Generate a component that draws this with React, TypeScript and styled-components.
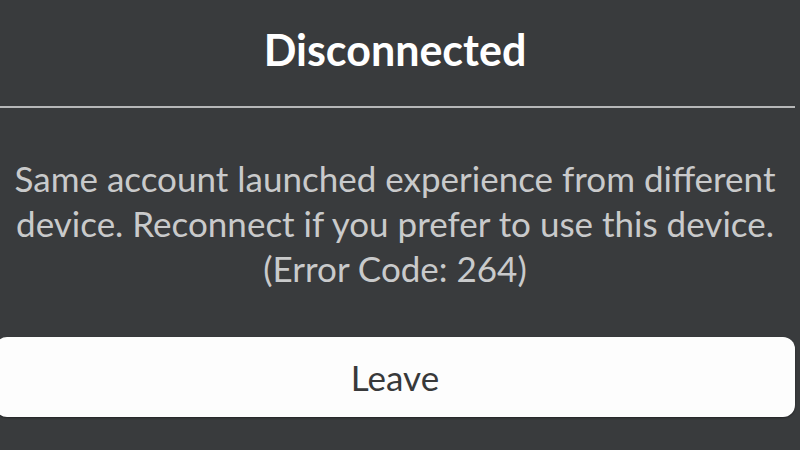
import styled, { createGlobalStyle } from "styled-components";

const GlobalStyle = createGlobalStyle`
  html, body {
    margin: 0;
    padding: 0;
    background: #393b3d;
  }
  body {
    width: 800px;
    height: 450px;
    overflow: hidden;
    font-family: Lato, "Noto Sans", sans-serif;
  }
`;

const Dialog = styled.div`
  width: 800px;
  height: 450px;
  margin-left: -5px;
  display: flex;
  flex-direction: column;
  align-items: stretch;
`;

const Title = styled.h1`
  margin: 0;
  padding-top: 26px;
  height: 106px;
  box-sizing: border-box;
  text-align: center;
  font-size: 43px;
  font-weight: 700;
  line-height: 48px;
  color: #ffffff;
`;

const Divider = styled.hr`
  margin: 0;
  border: none;
  height: 2px;
  background: #b6b7b8;
`;

const Message = styled.p`
  margin: 0;
  padding-top: 48px;
  text-align: center;
  font-size: 35px;
  line-height: 45px;
  color: #c9cacb;
`;

const Actions = styled.div`
  display: flex;
  padding-top: 46px;
`;

const Button = styled.button`
  flex: 1;
  height: 80px;
  padding: 0;
  border: none;
  border-radius: 12px;
  background: #fdfdfd;
  box-shadow: 0 1px 2px rgba(0, 0, 0, 0.4);
  font-family: inherit;
  font-size: 35px;
  line-height: 1;
  color: #38393a;
  cursor: pointer;
`;

function App() {
  return (
    <>
      <GlobalStyle />
      <Dialog>
        <Title>Disconnected</Title>
        <Divider />
        <Message>
          Same account launched experience from different
          <br />
          device. Reconnect if you prefer to use this device.
          <br />
          (Error Code: 264)
        </Message>
        <Actions>
          <Button>Leave</Button>
        </Actions>
      </Dialog>
    </>
  );
}

export default App;
